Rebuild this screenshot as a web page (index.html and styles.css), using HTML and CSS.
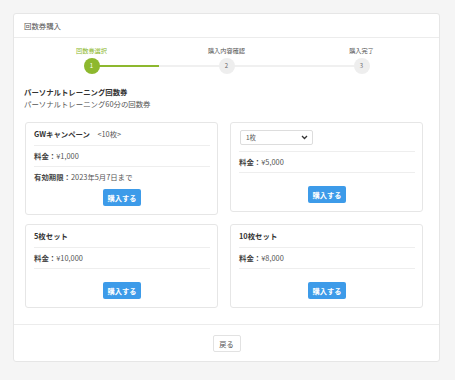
FILE: index.html
```html
<!DOCTYPE html>
<html lang="ja">
<head>
  <meta charset="UTF-8">
  <meta name="viewport" content="width=device-width, initial-scale=1">
  <title>回数券購入</title>
  <link rel="stylesheet" href="styles.css">
</head>
<body>
  <div class="panel">
    <div class="panel-header">回数券購入</div>

    <div class="panel-body">
      <div class="steps">
        <div class="step active">
          <div class="step-label">回数券選択</div>
          <div class="step-track"><span class="step-num">1</span></div>
        </div>
        <div class="step">
          <div class="step-label">購入内容確認</div>
          <div class="step-track"><span class="step-num">2</span></div>
        </div>
        <div class="step">
          <div class="step-label">購入完了</div>
          <div class="step-track"><span class="step-num">3</span></div>
        </div>
      </div>

      <div class="ticket-title">パーソナルトレーニング回数券</div>
      <div class="ticket-desc">パーソナルトレーニング60分の回数券</div>

      <div class="plans">
        <div class="plan">
          <div class="plan-row plan-name">GWキャンペーン　<span class="plan-count">&lt;10枚&gt;</span></div>
          <div class="plan-row"><b>料金：</b>¥1,000</div>
          <div class="plan-row last"><b>有効期限：</b>2023年5月7日まで</div>
          <div class="plan-foot near"><button class="buy-button">購入する</button></div>
        </div>

        <div class="plan">
          <div class="plan-row select-row">
            <div class="select-wrap">
              <select class="count-select">
                <option>1枚</option>
                <option>5枚</option>
                <option>10枚</option>
              </select>
              <svg class="select-arrow" width="7" height="5" viewBox="0 0 7 5"><path d="M1 1l2.5 2.5L6 1" fill="none" stroke="#333" stroke-width="1.3"/></svg>
            </div>
          </div>
          <div class="plan-row"><b>料金：</b>¥5,000</div>
          <div class="plan-foot"><button class="buy-button">購入する</button></div>
        </div>

        <div class="plan">
          <div class="plan-row plan-name">5枚セット</div>
          <div class="plan-row"><b>料金：</b>¥10,000</div>
          <div class="plan-foot"><button class="buy-button">購入する</button></div>
        </div>

        <div class="plan">
          <div class="plan-row plan-name">10枚セット</div>
          <div class="plan-row"><b>料金：</b>¥8,000</div>
          <div class="plan-foot"><button class="buy-button">購入する</button></div>
        </div>
      </div>
    </div>

    <div class="panel-footer">
      <button class="back-button">戻る</button>
    </div>
  </div>
</body>
</html>
```

FILE: styles.css
```css
body {
  margin: 0;
  padding: 13px 15px 0 13px;
  background-color: #f5f5f5;
  font-family: "Noto Sans CJK JP", sans-serif;
  font-size: 7.4px;
  color: #555;
}
.panel {
  width: 425px;
  background-color: #fff;
  border: 1px solid #e6e6e6;
  border-radius: 3px;
}
.panel-header {
  height: 23px;
  line-height: 23px;
  padding: 0 10px;
  border-bottom: 1px solid #ececec;
  color: #555;
}
.panel-body {
  padding: 8px 11px 16px 10px;
  border-bottom: 1px solid #ececec;
}
.steps {
  display: grid;
  grid-template-columns: repeat(3, 1fr);
  width: 405px;
}
.step {
  text-align: center;
}
.step-label {
  font-size: 6.2px;
  line-height: 9px;
  color: #555;
  margin-bottom: 3px;
}
.step.active .step-label {
  color: #8db82e;
}
.step-track {
  position: relative;
  height: 16px;
  display: flex;
  justify-content: center;
}
.step-track::before,
.step-track::after {
  content: "";
  position: absolute;
  top: 7px;
  height: 2px;
  background-color: #f0f0f0;
}
.step-track::before {
  left: 0;
  right: 50%;
}
.step-track::after {
  left: 50%;
  right: 0;
}
.step:first-child .step-track::before,
.step:last-child .step-track::after {
  display: none;
}
.step.active .step-track::after {
  background-color: #8db82e;
}
.step-num {
  position: relative;
  z-index: 1;
  width: 16px;
  height: 16px;
  line-height: 16px;
  border-radius: 50%;
  background-color: #eee;
  color: #666;
  font-size: 6px;
}
.step.active .step-num {
  background-color: #8db82e;
  color: #fff;
}
.ticket-title {
  margin-top: 12px;
  line-height: 12px;
  font-weight: bold;
  color: #333;
}
.ticket-desc {
  line-height: 12px;
  color: #555;
}
.plans {
  display: grid;
  grid-template-columns: 193px 193px;
  gap: 9px 12px;
  align-items: start;
  margin: 12px 0 0 1px;
}
.plan {
  border: 1px solid #e6e6e6;
  border-radius: 3px;
  padding: 0 7px 8px 8px;
}
.plan-row {
  height: 10px;
  line-height: 10px;
  padding: 5px 0;
  border-bottom: 1px solid #eee;
  color: #555;
}
.plan-row b {
  color: #444;
}
.plan-name {
  padding: 6px 0;
  font-weight: bold;
  color: #333;
}
.plan-count {
  font-weight: normal;
  color: #555;
}
.plan-row.last {
  border-bottom: none;
}
.select-row {
  height: 15px;
  padding: 7px 0 6px 1px;
}
.select-wrap {
  position: relative;
  width: 73px;
}
.count-select {
  appearance: none;
  display: block;
  width: 73px;
  height: 15px;
  padding: 0 5px;
  border: 1px solid #ddd;
  border-radius: 2px;
  background-color: #fff;
  font-family: inherit;
  font-size: 6.4px;
  color: #555;
}
.select-arrow {
  position: absolute;
  right: 5px;
  top: 5px;
}
.plan-foot {
  text-align: center;
  margin-top: 13px;
}
.plan-foot.near {
  margin-top: 2px;
}
.buy-button {
  height: 17px;
  padding: 0 5px;
  border: none;
  border-radius: 2px;
  background-color: #3d9be9;
  color: #fff;
  font-family: inherit;
  font-size: 7.2px;
  font-weight: bold;
  cursor: pointer;
}
.panel-footer {
  padding: 10px 0 9px;
  text-align: center;
}
.back-button {
  height: 17px;
  width: 28px;
  padding: 0;
  border: 1px solid #e2e2e2;
  border-radius: 2px;
  background-color: #fff;
  color: #555;
  font-family: inherit;
  font-size: 7.2px;
  cursor: pointer;
}
```
